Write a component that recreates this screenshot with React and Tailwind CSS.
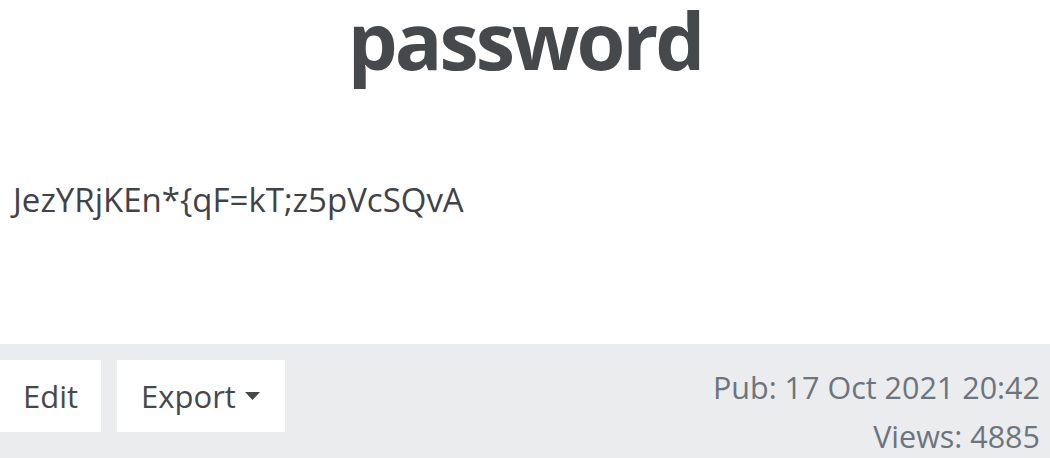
export default function App() {
  return (
    <div className="w-[1050px] h-[458px] overflow-hidden bg-white font-['Open_Sans',sans-serif] text-[#45494c]">
      <h1 className="text-center text-[79px] font-bold leading-none tracking-[-3px]">password</h1>
      <p className="mt-[101px] pl-[13px] text-[33px] leading-[40px] text-[#3f4346]">JezYRjKEn*{"{"}qF=kT;z5pVcSQvA</p>
      <footer className="mt-[124px] flex justify-between bg-[#ebecee] pt-4 pb-6 pr-[10px]">
        <div className="flex gap-4">
          <button className="h-[72px] bg-white px-[23px] text-[31px] text-[#45494c]">Edit</button>
          <button className="flex h-[72px] items-center gap-2 bg-white px-[24px] text-[31px] text-[#45494c]">
            Export
            <svg width="17" height="10" viewBox="0 0 17 10">
              <path d="M1 1h15L8.5 9z" fill="#45494c" />
            </svg>
          </button>
        </div>
        <div className="flex flex-col items-end pt-[3px] text-[30.5px] leading-[49px] text-[#6c757d]">
          <span>Pub: 17 Oct 2021 20:42</span>
          <span>Views: 4885</span>
        </div>
      </footer>
    </div>
  );
}
